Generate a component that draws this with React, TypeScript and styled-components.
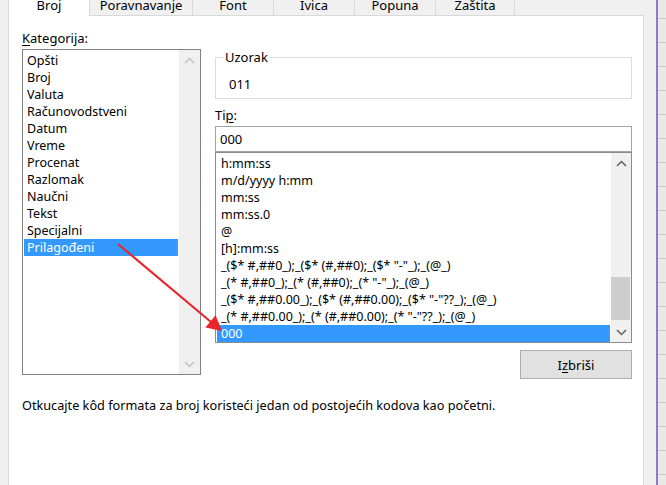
import * as React from 'react';
import styled, { createGlobalStyle } from 'styled-components';

const GlobalStyle = createGlobalStyle`
    html, body {
        margin: 0;
        padding: 0;
        background: #f0f0f0;
    }
`

const Root = styled.div`
    position: relative;
    width: 666px;
    height: 485px;
    overflow: hidden;
    display: flex;
    background: #f0f0f0;
    font-family: "Noto Sans", "Open Sans", sans-serif;
    font-size: 12.5px;
    color: #000;
`

const DialogArea = styled.div`
    width: 636px;
    margin-left: 8px;
    display: flex;
    flex-direction: column;
`

const WindowGap = styled.div`
    width: 12px;
`

const PurpleEdge = styled.div`
    width: 2px;
    background: #9178cb;
`

const SheetStrip = styled.div`
    flex: 1;
    background: repeating-linear-gradient(to bottom, #e9e9e9 0, #e9e9e9 23px, #c8c8c8 23px, #c8c8c8 24px);
    background-position: 0 -5px;
`

const TabStrip = styled.div`
    display: flex;
    align-items: flex-end;
    height: 22px;
    margin-top: -7px;
    font-size: 13px;
`

const Tab = styled.div<{ $width: number; $active?: boolean }>`
    box-sizing: border-box;
    width: ${p => p.$width}px;
    height: ${p => p.$active ? 23 : 22}px;
    margin-bottom: ${p => p.$active ? -1 : 0}px;
    display: flex;
    align-items: center;
    justify-content: center;
    padding-bottom: ${p => p.$active ? 1 : 0}px;
    border: 1px solid #d9d9d9;
    border-bottom: none;
    background: ${p => p.$active ? '#fff' : '#f0f0f0'};
    position: relative;
    z-index: ${p => p.$active ? 1 : 0};
    & + & {
        margin-left: -1px;
    }
`

const Panel = styled.div`
    flex: 1;
    box-sizing: border-box;
    background: #fff;
    border: 1px solid #d9d9d9;
    border-bottom: none;
    padding: 14px 0 0 13px;
    display: grid;
    grid-template-columns: 179px 417px;
    column-gap: 14px;
    align-content: start;
`

const FieldLabel = styled.div<{ $gap?: number }>`
    line-height: 16px;
    margin-top: ${p => p.$gap ?? 0}px;
    margin-bottom: 3px;
    font-size: 13px;
`

const Hotkey = styled.span`
    text-decoration: underline;
    text-underline-offset: 2px;
`

const ListBox = styled.div<{ $height: number; $border: string }>`
    box-sizing: border-box;
    height: ${p => p.$height}px;
    border: 1px solid ${p => p.$border};
    background: #fff;
    display: flex;
    overflow: hidden;
`

const ListItems = styled.div`
    flex: 1;
    padding-top: 2px;
    display: flex;
    flex-direction: column;
`

const ListRow = styled.div<{ $selected?: boolean; $indent: number }>`
    box-sizing: border-box;
    height: 17px;
    line-height: 17px;
    margin: 0 1px;
    padding-left: ${p => p.$indent}px;
    white-space: nowrap;
    background: ${p => p.$selected ? '#3399ff' : 'transparent'};
    color: ${p => p.$selected ? '#fff' : '#000'};
`

const ScrollBar = styled.div<{ $width: number }>`
    width: ${p => p.$width}px;
    background: #f0f0f0;
    display: flex;
    flex-direction: column;
`

const ScrollButton = styled.div`
    height: 20px;
    display: flex;
    align-items: center;
    justify-content: center;
`

const ScrollTrack = styled.div`
    flex: 1;
    display: flex;
    flex-direction: column;
`

const ScrollThumb = styled.div<{ $offset: number; $size: number }>`
    margin-top: ${p => p.$offset}px;
    height: ${p => p.$size}px;
    margin-right: 1px;
    background: #cdcdcd;
`

const RightColumn = styled.div`
    display: flex;
    flex-direction: column;
`

const GroupBox = styled.fieldset`
    margin: 0;
    min-width: 0;
    padding: 11px 8px 6px 8px;
    border: 1px solid #dcdcdc;
`

const GroupLegend = styled.legend`
    padding: 0 1px;
    line-height: 16px;
    font-size: 13px;
`

const SampleValue = styled.div`
    padding-left: 5px;
    line-height: 16px;
    font-size: 13px;
`

const TypeInput = styled.input`
    box-sizing: border-box;
    height: 26px;
    width: 100%;
    margin: 0;
    padding: 0 4px;
    border: 1px solid #a3a3a3;
    font: inherit;
    font-size: 13px;
    color: #000;
    outline: none;
`

const DeleteButton = styled.button`
    align-self: flex-end;
    box-sizing: border-box;
    width: 112px;
    height: 29px;
    margin-top: 7px;
    background: #e1e1e1;
    border: 1px solid #adadad;
    font: inherit;
    font-size: 13px;
    color: #000;
    padding: 0;
`

const Hint = styled.div`
    grid-column: 1 / -1;
    margin-top: 18px;
    line-height: 16px;
    font-size: 12.7px;
`

const ArrowOverlay = styled.svg`
    position: absolute;
    left: 0;
    top: 0;
    pointer-events: none;
`

function Chevron({ up, color }: { up?: boolean; color: string }) {
    return (
        <svg width="11" height="7" viewBox="0 0 11 7">
            <polyline
                points={up ? '1,6 5.5,1.5 10,6' : '1,1 5.5,5.5 10,1'}
                fill="none"
                stroke={color}
                strokeWidth="1.5"
            />
        </svg>
    );
}

const tabs = [
    { label: 'Broj', width: 82 },
    { label: 'Poravnavanje', width: 104 },
    { label: 'Font', width: 82 },
    { label: 'Ivica', width: 82 },
    { label: 'Popuna', width: 82 },
    { label: 'Zaštita', width: 80 },
];

const categories = [
    'Opšti', 'Broj', 'Valuta', 'Računovodstveni', 'Datum', 'Vreme',
    'Procenat', 'Razlomak', 'Naučni', 'Tekst', 'Specijalni', 'Prilagođeni',
];

const formats = [
    'h:mm:ss',
    'm/d/yyyy h:mm',
    'mm:ss',
    'mm:ss.0',
    '@',
    '[h]:mm:ss',
    '_($* #,##0_);_($* (#,##0);_($* "-"_);_(@_)',
    '_(* #,##0_);_(* (#,##0);_(* "-"_);_(@_)',
    '_($* #,##0.00_);_($* (#,##0.00);_($* "-"??_);_(@_)',
    '_(* #,##0.00_);_(* (#,##0.00);_(* "-"??_);_(@_)',
    '000',
];

export default function App() {
    return (
        <Root>
            <GlobalStyle />
            <DialogArea>
                <TabStrip>
                    {tabs.map((t, i) => (
                        <Tab key={t.label} $width={t.width} $active={i === 0}>{t.label}</Tab>
                    ))}
                </TabStrip>
                <Panel>
                    <FieldLabel><Hotkey>K</Hotkey>ategorija:</FieldLabel>
                    <div />
                    <ListBox $height={326} $border="#828282">
                        <ListItems>
                            {categories.map((c, i) => (
                                <ListRow key={c} $indent={3} $selected={i === categories.length - 1}>{c}</ListRow>
                            ))}
                        </ListItems>
                        <ScrollBar $width={21}>
                            <ScrollButton><Chevron up color="#c2c2c2" /></ScrollButton>
                            <ScrollTrack />
                            <ScrollButton><Chevron color="#c2c2c2" /></ScrollButton>
                        </ScrollBar>
                    </ListBox>
                    <RightColumn>
                        <GroupBox>
                            <GroupLegend>Uzorak</GroupLegend>
                            <SampleValue>011</SampleValue>
                        </GroupBox>
                        <FieldLabel $gap={8}>Ti<Hotkey>p</Hotkey>:</FieldLabel>
                        <TypeInput readOnly defaultValue="000" />
                        <ListBox $height={191} $border="#8c8c8c">
                            <ListItems>
                                {formats.map((f, i) => (
                                    <ListRow key={f} $indent={4} $selected={i === formats.length - 1}>{f}</ListRow>
                                ))}
                            </ListItems>
                            <ScrollBar $width={20}>
                                <ScrollButton><Chevron up color="#606060" /></ScrollButton>
                                <ScrollTrack>
                                    <ScrollThumb $offset={104} $size={43} />
                                </ScrollTrack>
                                <ScrollButton><Chevron color="#606060" /></ScrollButton>
                            </ScrollBar>
                        </ListBox>
                        <DeleteButton>I<Hotkey>z</Hotkey>briši</DeleteButton>
                    </RightColumn>
                    <Hint>Otkucajte kôd formata za broj koristeći jedan od postojećih kodova kao početni.</Hint>
                </Panel>
            </DialogArea>
            <WindowGap />
            <PurpleEdge />
            <SheetStrip />
            <ArrowOverlay width="666" height="485" viewBox="0 0 666 485">
                <line x1="118" y1="244" x2="211" y2="322" stroke="#e8262c" strokeWidth="2.2" />
                <polygon points="222,331 205.4,327.5 215.6,315.3" fill="#e8262c" />
            </ArrowOverlay>
        </Root>
    );
}
